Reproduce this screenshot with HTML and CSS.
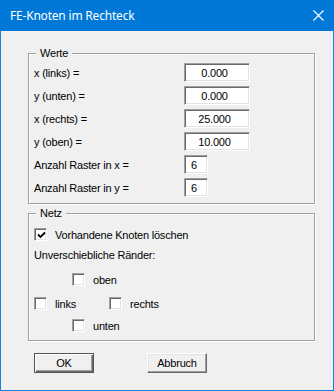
FILE: index.html
```html
<!DOCTYPE html>
<html lang="de">
<head>
    <meta charset="UTF-8">
    <title>FE-Knoten im Rechteck</title>
    <link rel="stylesheet" href="styles.css">
</head>
<body>
    <div class="window">
        <div class="titlebar">
            <span class="title">FE-Knoten im Rechteck</span>
            <svg class="close" width="11" height="11" viewBox="0 0 11 11">
                <path d="M0.5 0.5 L10.5 10.5 M10.5 0.5 L0.5 10.5" stroke="#fff" stroke-width="1.1" fill="none"/>
            </svg>
        </div>

        <div class="client">
            <!-- Werte -->
            <div class="group werte">
                <span class="legend">Werte</span>
                <div class="fields">
                    <label>x (links) =</label>
                    <input class="field wide" type="text" value="0.000">
                    <label>y (unten) =</label>
                    <input class="field wide" type="text" value="0.000">
                    <label>x (rechts) =</label>
                    <input class="field wide" type="text" value="25.000">
                    <label>y (oben) =</label>
                    <input class="field wide" type="text" value="10.000">
                    <label>Anzahl Raster in x =</label>
                    <input class="field small" type="text" value="6">
                    <label>Anzahl Raster in y =</label>
                    <input class="field small" type="text" value="6">
                </div>
            </div>

            <!-- Netz -->
            <div class="group netz">
                <span class="legend">Netz</span>
                <div class="row first">
                    <span class="opt">
                        <span class="cb">
                            <svg width="9" height="9" viewBox="0 0 9 9">
                                <path d="M1 3.5 L3.5 6 L8 1.5" stroke="#000" stroke-width="1.8" fill="none"/>
                            </svg>
                        </span>
                        Vorhandene Knoten löschen
                    </span>
                </div>
                <div class="row caption">Unverschiebliche Ränder:</div>
                <div class="row oben indent">
                    <span class="opt"><span class="cb"></span>oben</span>
                </div>
                <div class="row seiten">
                    <span class="opt links"><span class="cb"></span>links</span>
                    <span class="opt"><span class="cb"></span>rechts</span>
                </div>
                <div class="row unten indent">
                    <span class="opt"><span class="cb"></span>unten</span>
                </div>
            </div>

            <div class="buttons">
                <button class="btn default">OK</button>
                <button class="btn">Abbruch</button>
            </div>
        </div>
    </div>
</body>
</html>
```

FILE: styles.css
```css
body {
    margin: 0;
    background-color: #f0f0f0;
    font-family: "Liberation Sans", Arial, sans-serif;
    font-size: 11px;
    color: #000;
}
.window {
    width: 334px;
    height: 391px;
    box-sizing: border-box;
    border: 1px solid #1883d7;
    border-top: none;
    background-color: #f0f0f0;
}
.titlebar {
    height: 31px;
    margin: 0 -1px;
    background-color: #0078d7;
    color: #fff;
    display: flex;
    align-items: center;
    justify-content: space-between;
    padding: 0 10px 0 10px;
}
.title {
    font-family: "Noto Sans", "Open Sans", sans-serif;
    font-size: 12px;
    letter-spacing: -0.2px;
    margin-top: -1px;
}
.close {
    margin-top: -1px;
}
.client {
    padding: 22px 0 0 27px;
}

/* Gruppenrahmen */
.group {
    position: relative;
    width: 287px;
    box-sizing: border-box;
    border: 1px solid #a0a0a0;
    box-shadow: inset 1px 1px #fff, 1px 1px #fff;
}
.legend {
    position: absolute;
    top: -8px;
    left: 7px;
    padding: 0 4px;
    background-color: #f0f0f0;
    line-height: 14px;
    letter-spacing: -0.2px;
}
.werte {
    height: 151px;
    padding: 9px 0 0 5px;
}
.fields {
    display: grid;
    grid-template-columns: 150px auto;
    grid-auto-rows: 19px;
    row-gap: 4px;
    align-items: center;
}
.fields label {
    letter-spacing: -0.2px;
}
.field {
    height: 19px;
    box-sizing: border-box;
    margin: 0;
    padding: 0;
    font-family: "Liberation Sans", Arial, sans-serif;
    font-size: 11px;
    letter-spacing: -0.2px;
    color: #000;
    background-color: #fff;
    border-top: 1px solid #a0a0a0;
    border-left: 1px solid #a0a0a0;
    border-right: 1px solid #fff;
    border-bottom: 1px solid #fff;
    box-shadow: inset 1px 1px #696969, inset -1px -1px #e3e3e3;
    outline: none;
}
.wide {
    width: 66px;
    text-align: center;
    padding-right: 5px;
}
.small {
    width: 24px;
    padding-left: 6px;
}

/* Netz */
.netz {
    margin-top: 9px;
    height: 128px;
    padding: 14px 0 0 5px;
}
.row {
    display: flex;
    align-items: center;
    height: 13px;
    letter-spacing: -0.2px;
}
.caption {
    margin-top: 7px;
}
.oben {
    margin-top: 12px;
}
.seiten {
    margin-top: 11px;
}
.unten {
    margin-top: 9px;
}
.indent {
    padding-left: 38px;
}
.opt {
    display: flex;
    align-items: center;
    gap: 8px;
}
.links {
    width: 75px;
}
.cb {
    width: 13px;
    height: 13px;
    box-sizing: border-box;
    background-color: #fff;
    border-top: 1px solid #a0a0a0;
    border-left: 1px solid #a0a0a0;
    border-right: 1px solid #fff;
    border-bottom: 1px solid #fff;
    box-shadow: inset 1px 1px #696969, inset -1px -1px #e3e3e3;
    display: flex;
    align-items: center;
    justify-content: center;
}
.cb svg {
    margin: 1px 0 0 1px;
}

/* Knoepfe */
.buttons {
    display: flex;
    gap: 53px;
    margin-top: 12px;
    padding-left: 6px;
}
.btn {
    width: 60px;
    height: 20px;
    box-sizing: border-box;
    padding: 0;
    font-family: "Liberation Sans", Arial, sans-serif;
    font-size: 11px;
    letter-spacing: -0.2px;
    color: #000;
    background-color: #f0f0f0;
    border-top: 1px solid #fff;
    border-left: 1px solid #fff;
    border-right: 1px solid #696969;
    border-bottom: 1px solid #696969;
    box-shadow: inset -1px -1px #a0a0a0, inset 1px 1px #e3e3e3;
}
.btn.default {
    border: 1px solid #555;
    box-shadow: inset 1px 1px #fff, inset -1px -1px #696969, inset -2px -2px #a0a0a0;
}
```
